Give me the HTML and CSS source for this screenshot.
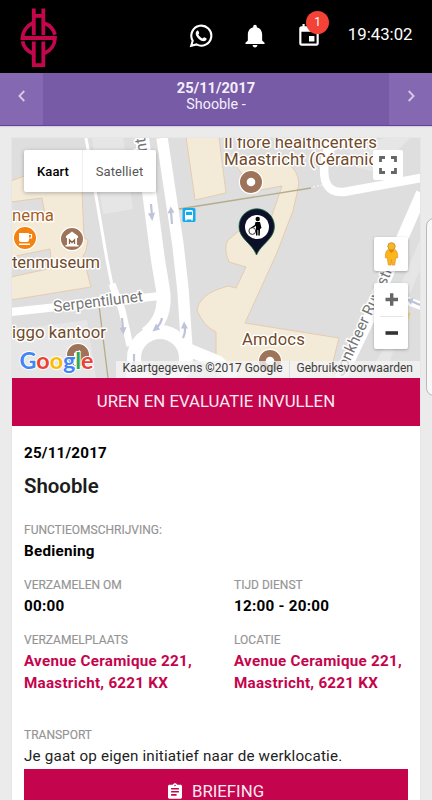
FILE: index.html
```html
<!DOCTYPE html>
<html lang="nl">
<head>
<meta charset="utf-8">
<title>Shooble</title>
<link rel="stylesheet" href="styles.css">
</head>
<body>
<header class="topbar">
  <svg class="logo" viewBox="20 7 38 62" width="38" height="62" fill="none" stroke="#c4064d" stroke-width="3.8">
    <path d="M33.800 8.500V35M43.300 8.500V35M34 15.800H43"/>
    <path d="M32.500 23.300A16.700 16.700 0 0 0 22.500 38H55A16.700 16.700 0 0 1 44.500 53.200"/>
    <path d="M44.500 23.300A16.700 16.700 0 0 1 55 34.800M22.500 41.300A16.700 16.700 0 0 0 32.500 53.200"/>
    <path d="M33.800 41.500V65.100H43.300V41.500"/>
  </svg>
  <div class="actions">
    <svg viewBox="0 0 24 24" width="24" height="24" fill="none" stroke="#fff">
      <path d="M2.200 21.800L3.700 16.700A10 10 0 1 1 7.500 20.400Z" stroke-width="2.100"/>
      <path d="M8 6.800C8.600 6.300 9.200 6.500 9.400 7L10.200 8.900C10.400 9.400 9.500 10.100 9.300 10.500C10.200 12.300 11.700 13.600 13.600 14.500C14.200 14.200 14.700 13.100 15.300 13.300L17.300 14.300C18 14.700 17.300 16.300 16.400 16.800C14 18 10.400 16 8.400 13.400C6.700 11.300 5.900 8.700 8 6.800Z" fill="#fff" stroke="none"/>
    </svg>
    <svg viewBox="0 0 24 24" width="26" height="26" fill="#fff"><path d="M12 22c1.100 0 2-.9 2-2h-4c0 1.100.9 2 2 2zm6-6v-5c0-3.070-1.640-5.640-4.500-6.320V4c0-.83-.67-1.500-1.500-1.500s-1.500.67-1.500 1.500v.68C7.630 5.360 6 7.920 6 11v5l-2 2v1h16v-1l-2-2z" transform="matrix(1.1 0 0 1.07 -1.2 -1)"/></svg>
    <div class="calendar">
      <svg viewBox="0 0 24 24" width="26" height="26" fill="#fff"><path d="M17 12h-5v5h5v-5zM16 1v2H8V1H6v2H5c-1.110 0-2 .9-2 2v14c0 1.100.9 2 2 2h14c1.100 0 2-.9 2-2V5c0-1.100-.9-2-2-2h-1V1h-2zm3 18H5V8h14v11z"/></svg>
      <span class="badge">1</span>
    </div>
  </div>
  <time class="clock">19:43:02</time>
</header>

<nav class="daybar">
  <div class="step"><svg viewBox="0 0 8 12" width="8" height="12"><path d="M6.300 1L1.400 6L6.300 11"/></svg></div>
  <div class="day"><b>25/11/2017</b><span>Shooble -</span></div>
  <div class="step"><svg viewBox="0 0 8 12" width="8" height="12"><path d="M1.700 1L6.600 6L1.700 11"/></svg></div>
</nav>

<main class="card">
  <section class="map">
    <svg class="canvas" viewBox="12 138 408 240" width="408" height="240">
      <rect x="12" y="138" width="408" height="240" fill="#dedede"/>
      <g fill="#e6e6e6">
        <path d="M92 138H123L133 209L103 214Z"/>
        <path d="M12 330L87 320L96 378H12Z"/>
        <path d="M348 150L385 138H410L376 172L358 168Z"/>
        <path d="M420 240L401 284L410 294L420 270ZM386 346L374 364L386 372L394 350Z"/>
      </g>
      <g fill="#f3ead8" stroke="#e5ccb0" stroke-width="1">
        <path d="M11 181L24 176L75 165L82 190L84 238L88 240L86 251L83 256L91 287L11 300V277L52 268L50 249L11 257V221L45 215L42 198L11 202Z"/>
        <path d="M186 137H219L226 193L195 200Z"/>
        <path d="M236 166L262 160Q283 158 292 167Q301 177 298 189L293 211L276 255L245 323L339 338L333 362V379H216V332Q203 326 197 310Q199 297 216 290L228 286L236 288L246 267L229 262Q223 248 228 240L252 220L271 218L282 186L255 191Z"/>
      </g>
      <g fill="none" stroke="#fff">
        <path d="M11 312L160 296" stroke-width="8"/>
        <path d="M86 138L107 260L113 290" stroke-width="3"/>
        <path d="M112 284L122 310L130 346" stroke-width="7"/>
        <path d="M142 138L158 260L163 290Q167 319 146 334" stroke-width="14"/>
        <path d="M162 138L178 245L183 290L187 350" stroke-width="11.500"/>
        <circle cx="160" cy="358" r="26" stroke-width="14"/>
        <path d="M134 345L130 378" stroke-width="9"/>
        <path d="M184 348L218 362L235 378" stroke-width="13"/>
        <path d="M331 137L325 160Q320 194 344 192L421 178" stroke-width="8.500"/>
        <path d="M331 150L352 137" stroke-width="5"/>
        <path d="M422 193L401 241L372 312L340 379" stroke-width="12"/>
        <path d="M400 298L421 306" stroke-width="8"/>
      </g>
      <path d="M179 209L311 188M99 305L108 378" stroke="#b5ad89" stroke-width="1.300" fill="none"/>
      <path d="M313 187L322 185" stroke="#fff" stroke-dasharray="2 2"/>
      <path d="M406 312L411 313L408 320H406Z" fill="#f2cf7d"/>
      <g fill="none" stroke="#bdc3d9" stroke-width="2.200">
        <path d="M151 204L152 216M172 224L171 212M122 318L123 329M162 318Q161 324 156 328M183 338Q186 332 184.500 326M134 354V368M411 301L420 305"/>
      </g>
      <path d="M148 213.500L155 212.500L152.300 221ZM167.500 213.500L174.500 212.500L170.700 206.500ZM119.500 328L126.500 327L123.500 334.500ZM156 323.500L160 329.500L152.500 331.500ZM181 328.500L188 328.500L184 321.500ZM407 299L413.500 298L411 305Z" fill="#bdc3d9"/>
      <g><rect x="182.500" y="208" width="13" height="14" rx="1.500" fill="#12abf0"/><rect x="185" y="210" width="8" height="9.500" rx="1.500" fill="#fff"/><path d="M186 211.800H192V215H186Z" fill="#12abf0"/><path d="M186 219V220.500M192 219V220.500" stroke="#fff" stroke-width="1.500"/></g>
      <g stroke="#fff" stroke-width="1.200">
        <circle cx="25" cy="238" r="11.600" fill="#f5820f"/><circle cx="72" cy="239" r="11.600" fill="#9d7459"/>
        <circle cx="251" cy="182" r="11.600" fill="#9d7459"/><circle cx="78" cy="355" r="11.600" fill="#9d7459"/><circle cx="270" cy="361" r="11.600" fill="#9d7459"/>
      </g>
      <g fill="#fff"><circle cx="251" cy="182" r="4.300"/><circle cx="270" cy="361" r="4.300"/><path d="M19 233H29V240Q29 242 27 242H21Q19 242 19 240ZM19 243.500H30V245H19Z"/><path d="M66 236L72 231.500L78 236V238H66ZM67 238H77V245H67ZM65.500 245H78.500V246.500H65.500Z"/><path d="M74 353L80 350V365H74Z"/></g>
      <path d="M29 234.500H31.500V238H29" fill="none" stroke="#fff" stroke-width="1.200"/>
      <path d="M69.500 244V239.800L72 242.500L74.500 239.800V244" fill="none" stroke="#8c6046" stroke-width="1.300"/>
      <g class="label">
        <text x="224" y="148" textLength="153">Il fiore healthcenters</text>
        <text x="224" y="164.500" textLength="154">Maastricht (Céramiq</text>
        <text x="12" y="220.500" textLength="42" class="orange">nema</text>
        <text x="12" y="268" textLength="88">tenmuseum</text>
        <text x="12" y="338" textLength="94">iggo kantoor</text>
        <text x="242" y="344.500" textLength="63">Amdocs</text>
      </g>
      <g class="street">
        <text x="54" y="312" textLength="90" transform="rotate(-7 54 312)">Serpentilunet</text>
        <text x="343" y="377" textLength="121" transform="rotate(-65 343 377)">Jonkheer Ruysstr.</text>
        <text x="147" y="151" transform="rotate(-98 147 151)">ht</text>
      </g>
      <path d="M256.500 255C252 243 239 239 239 226.500A17.700 17.700 0 0 1 274.400 226.500C274.400 239 261 244 256.500 255Z" fill="#0c1028" stroke="#17643f" stroke-width=".8"/>
      <circle cx="257" cy="227" r="12" fill="#fff"/>
      <circle cx="257.700" cy="219" r="2.200"/><path d="M255.500 222H260L261.500 228L260 229L259.800 235.500H258.300V230H257.500V235.500H256V226L251.500 228.500L251 227.500L254.800 225Z"/><circle cx="252.300" cy="231" r="3.400" fill="none" stroke="#333" stroke-width="1"/>
      <rect x="116" y="361" width="304" height="17" fill="#f3f3f3" fill-opacity=".78"/>
      <path d="M289.500 361V378" stroke="#ddd"/>
      <g class="legal"><text x="122.500" y="372" textLength="160">Kaartgegevens ©2017 Google</text><text x="296.500" y="372" textLength="116.500">Gebruiksvoorwaarden</text></g>
      <text class="google" x="19.500" y="368.500" textLength="74" lengthAdjust="spacingAndGlyphs"><tspan fill="#4285f4">G</tspan><tspan fill="#ea4335">o</tspan><tspan fill="#fbbc05">o</tspan><tspan fill="#4285f4">g</tspan><tspan fill="#34a853">l</tspan><tspan fill="#ea4335">e</tspan></text>
    </svg>
    <div class="maptype"><button class="active">Kaart</button><button>Satelliet</button></div>
    <div class="control fullscreen"><svg viewBox="0 0 18 18" width="18" height="18"><path d="M1.500 6V1.500H6M12 1.500H16.500V6M16.500 12V16.500H12M6 16.500H1.500V12" fill="none" stroke="#666" stroke-width="2.800"/></svg></div>
    <div class="control pegman"><svg viewBox="0 0 16 26" width="15" height="24"><path d="M4 8.500H12Q15 10 14.700 17L12.500 17.500L11.500 25H8.500L8 19L7.500 25H4.500L3.500 17.500L1.300 17Q1 10 4 8.500Z" fill="#fbb61c" stroke="#dd912a" stroke-width=".7"/><circle cx="8" cy="4.700" r="4" fill="#fbb61c" stroke="#b98532" stroke-width=".8"/><path d="M5 9H11L8 12Z" fill="#e57b16"/></svg></div>
    <div class="control zoom"><svg viewBox="0 0 33 66" width="33" height="66"><path d="M10.500 16.500H23M16.700 10.300V22.700" stroke="#666" stroke-width="3.400"/><path d="M5 33.500H28" stroke="#e6e6e6"/><path d="M10.500 50H23" stroke="#333" stroke-width="3.600"/></svg></div>
  </section>
  <button class="primary">UREN EN EVALUATIE INVULLEN</button>
  <section class="details">
    <b class="date">25/11/2017</b>
    <h1>Shooble</h1>
    <dl>
      <div class="wide"><dt>FUNCTIEOMSCHRIJVING:</dt><dd>Bediening</dd></div>
      <div><dt>VERZAMELEN OM</dt><dd>00:00</dd></div>
      <div><dt>TIJD DIENST</dt><dd>12:00 - 20:00</dd></div>
      <div><dt>VERZAMELPLAATS</dt><dd class="place">Avenue Ceramique 221,<br>Maastricht, 6221 KX</dd></div>
      <div><dt>LOCATIE</dt><dd class="place">Avenue Ceramique 221,<br>Maastricht, 6221 KX</dd></div>
      <div class="wide transport"><dt>TRANSPORT</dt><dd class="plain">Je gaat op eigen initiatief naar de werklocatie.</dd></div>
    </dl>
    <button class="primary briefing"><svg viewBox="3 1 18 20" width="14" height="16" fill="#fff"><path d="M19 3h-4.180C14.400 1.840 13.300 1 12 1c-1.300 0-2.400.84-2.820 2H5c-1.100 0-2 .9-2 2v14c0 1.100.9 2 2 2h14c1.100 0 2-.9 2-2V5c0-1.100-.9-2-2-2zm-7 0c.55 0 1 .45 1 1s-.45 1-1 1-1-.45-1-1 .45-1 1-1zm2 14H7v-2h7v2zm3-4H7v-2h10v2zm0-4H7V7h10v2z"/></svg>BRIEFING</button>
  </section>
</main>
<div class="drawer-handle"></div>
</body>
</html>
```
FILE: styles.css
```css
* { box-sizing: border-box; }
html, body { height: 800px; overflow: hidden; }
body { margin: 0; background: #ebebeb; font-family: Roboto, "Liberation Sans", sans-serif; color: #000; position: relative; }
button { font: inherit; border: 0; padding: 0; }
svg { display: block; flex: none; }

.topbar { height: 73px; background: #000; display: flex; align-items: center; padding: 0 19.5px 4px 20px; }
.logo { margin-top: 7px; }
.actions { display: flex; align-items: center; gap: 28.5px; margin: 2px 0 0 131px; }
.calendar { position: relative; }
.badge { position: absolute; left: 10px; top: -12px; width: 23px; height: 23px; border-radius: 50%; background: #f44336; color: #fff; font-size: 12px; line-height: 22px; text-align: center; }
.clock { margin: -2px 0 0 auto; color: #fff; font-size: 16.8px; white-space: nowrap; }

.daybar { height: 53px; background: #785ba6; border-bottom: 1px solid #6642a0; display: flex; box-shadow: 0 1px 1px #d6d1df; }
.step { width: 43px; background: #8468b1; display: flex; align-items: center; justify-content: center; padding-bottom: 6px; }
.step path { fill: none; stroke: #d6cce5; stroke-width: 1.8; }
.day { flex: 1; display: flex; flex-direction: column; align-items: center; padding-top: 7px; color: #f3effa; font-size: 14.3px; line-height: 16px; }
.day b { font-size: 14.7px; }

.card { margin: 12px 12px 0; background: #fff; box-shadow: 0 0 1px #ccc; }
.map { position: relative; height: 240px; overflow: hidden; }
.label text { font-size: 16.8px; fill: #714a2a; stroke: #fff; stroke-width: 3px; stroke-linejoin: round; paint-order: stroke; }
.label .orange { fill: #a75d1e; }
.street text { font-size: 15.5px; fill: #757575; stroke: #fff; stroke-width: 3px; paint-order: stroke; }
.legal text { font-size: 12px; fill: #3c3c3c; }
.google { font-family: Lato, sans-serif; font-size: 23.5px; font-weight: 700; stroke: #fff; stroke-width: 2px; paint-order: stroke; }
.maptype { position: absolute; left: 12px; top: 12px; display: flex; height: 42px; background: #fff; border-radius: 2px; box-shadow: 0 1px 4px #0004; }
.maptype button { width: 73px; background: none; color: #565656; font-size: 13px; letter-spacing: .1px; }
.maptype .active { width: 59px; color: #000; font-weight: 500; border-right: 1px solid #eee; }
.control { position: absolute; background: #fff; border-radius: 2px; box-shadow: 0 1px 3px #0004; display: flex; align-items: center; justify-content: center; }
.fullscreen { left: 361px; top: 12px; width: 30px; height: 30px; box-shadow: none; }
.pegman { left: 362px; top: 99px; width: 34px; height: 34px; }
.zoom { left: 362px; top: 145px; width: 34px; height: 66px; }

.primary { width: 100%; height: 48px; background: #c4044d; color: #fbe9f0; font-size: 16.8px; display: flex; align-items: center; justify-content: center; padding-bottom: 2px; }
.details { padding: 0 12px; height: 374px; }
.date { display: block; padding-top: 17px; font-size: 15.2px; line-height: 20px; letter-spacing: .2px; }
h1 { margin: 10px 0 0; font-size: 20.4px; line-height: 26px; font-weight: 600; color: #1c1c1c; }
dl { margin: 20px 0 0; display: grid; grid-template-columns: 210px 1fr; row-gap: 12px; }
.wide { grid-column: 1 / -1; }
dt { font-size: 12px; line-height: 23px; height: 21px; color: #949494; -webkit-text-stroke: .15px #949494; }
dd { margin: 0; font-size: 15.2px; letter-spacing: .27px; line-height: 22px; font-weight: 700; white-space: nowrap; }
.place { color: #c4044d; }
.transport { margin-top: 18px; }
.plain { font-weight: 400; letter-spacing: .18px; color: #222; }
.briefing { margin-top: 2px; height: 48px; gap: 10px; padding-bottom: 4px; }
.drawer-handle { position: absolute; left: 426px; top: 218px; width: 16px; height: 178px; background: #f8f8f8; border: 1px solid #b9b9b9; border-radius: 8px; }
```
